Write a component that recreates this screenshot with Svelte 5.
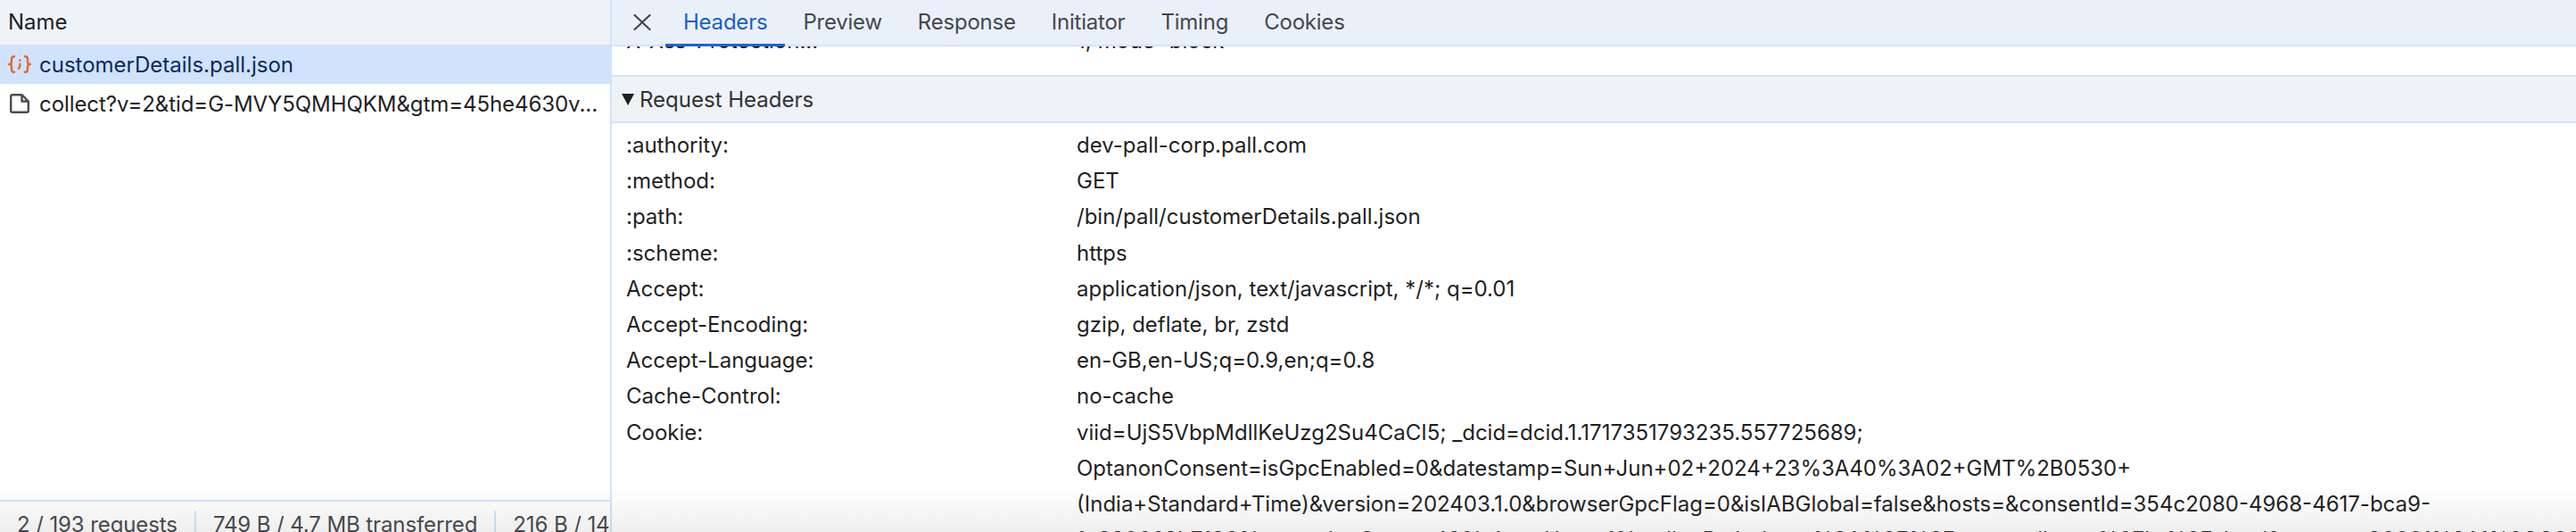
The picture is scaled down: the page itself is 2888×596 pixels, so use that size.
<script>
  const headers = [
    [':authority:', 'dev-pall-corp.pall.com'],
    [':method:', 'GET'],
    [':path:', '/bin/pall/customerDetails.pall.json'],
    [':scheme:', 'https'],
    ['Accept:', 'application/json, text/javascript, */*; q=0.01'],
    ['Accept-Encoding:', 'gzip, deflate, br, zstd'],
    ['Accept-Language:', 'en-GB,en-US;q=0.9,en;q=0.8'],
    ['Cache-Control:', 'no-cache']
  ];
  const cookie = [
    'viid=UjS5VbpMdllKeUzg2Su4CaCI5; _dcid=dcid.1.1717351793235.557725689;',
    'OptanonConsent=isGpcEnabled=0&datestamp=Sun+Jun+02+2024+23%3A40%3A02+GMT%2B0530+',
    '(India+Standard+Time)&version=202403.1.0&browserGpcFlag=0&isIABGlobal=false&hosts=&consentId=354c2080-4968-4617-bca9-',
    '1e380668b7136&interactionCount=49&isAnonUser=1&landingPath=https%3A%2F%2Fwww.pall.com%2Fbr%2Fcloud&groups=C0001%3A1%2CC0003'
  ];
  const tabs = ['Headers', 'Preview', 'Response', 'Initiator', 'Timing', 'Cookies'];
</script>

<div class="root">
  <aside class="left">
    <div class="name-head">Name</div>
    <div class="req selected">
      <svg class="ico-json" viewBox="0 0 26 20" fill="none" stroke="#e06a35" stroke-width="2.400" stroke-linecap="round" stroke-linejoin="round">
        <path d="M7 1.200C4.800 1.200 4 2.400 4 4v3.500C4 9 3 10 1.200 10 3 10 4 11 4 12.500V16c0 1.600.8 2.800 3 2.800"/>
        <path d="M19 1.200c2.200 0 3 1.200 3 2.800v3.500c0 1.500 1 2.500 2.800 2.500-1.800 0-2.800 1-2.800 2.500V16c0 1.600-.8 2.800-3 2.800"/>
        <path d="M13.300 5.500v.2M13.300 9.800v2.400c0 1-.6 2-1.500 2.600"/>
      </svg>
      <span>customerDetails.pall.json</span>
    </div>
    <div class="req">
      <svg class="ico-file" viewBox="0 0 22 22" fill="none" stroke="#4a4c50" stroke-width="2.400" stroke-linejoin="round">
        <path d="M3 1.200h10.500l7.300 7.300V19a1.800 1.800 0 0 1-1.800 1.800H3A1.800 1.800 0 0 1 1.200 19V3A1.800 1.800 0 0 1 3 1.200z"/>
        <path d="M13.500 1.200v7.300h7.300"/>
      </svg>
      <span class="clip">collect?v=2&amp;tid=G-MVY5QMHQKM&amp;gtm=45he4630v...</span>
    </div>
    <div class="spacer"></div>
    <div class="status">
      <span>2 / 193 requests</span>
      <span>749 B / 4.7 MB transferred</span>
      <span>216 B / 14</span>
    </div>
  </aside>
  <main class="right">
    <nav class="tabbar">
      <svg class="close" viewBox="0 0 20 18" fill="none" stroke="#45474b" stroke-width="2.200" stroke-linecap="round">
        <path d="M1.500 1l17 16M18.500 1L1.500 17"/>
      </svg>
      {#each tabs as t, i}
        <div class="tab" class:active={i === 0}>{t}</div>
      {/each}
    </nav>
    <div class="clipped">
      <div class="row cut"><div class="k">X-Xss-Protection...</div><div class="v">1; mode=block</div></div>
    </div>
    <div class="section">
      <span class="tri"></span>
      <span>Request Headers</span>
    </div>
    <div class="list">
      {#each headers as [k, v]}
        <div class="row"><div class="k">{k}</div><div class="v">{v}</div></div>
      {/each}
      <div class="row">
        <div class="k">Cookie:</div>
        <div class="v">{#each cookie as line}<div class="line">{line}</div>{/each}</div>
      </div>
    </div>
  </main>
  <div class="fade"></div>
</div>

<style>
  :global(body) { margin: 0; background: #fff; }
  .root {
    position: relative;
    width: 2888px;
    height: 596px;
    overflow: hidden;
    display: grid;
    grid-template-columns: 686px 1fr;
    font-family: Inter, "Liberation Sans", sans-serif;
    font-size: 24px;
    letter-spacing: 0;
    color: #1f1f1f;
  }
  .left {
    display: flex;
    flex-direction: column;
    box-sizing: border-box;
    border-right: 2px solid #d3e3fd;
    height: 596px;
    overflow: hidden;
  }
  .name-head {
    height: 50px;
    flex: none;
    box-sizing: border-box;
    padding-left: 9px;
    line-height: 50px;
    background: #eff3f8;
  }
  .req {
    height: 44px;
    flex: none;
    display: flex;
    align-items: center;
    white-space: nowrap;
    color: #1f1f1f;
  }
  .req.selected { background: #d0e2fc; color: #0a2a5c; }
  .ico-json { width: 26px; height: 20px; flex: none; margin: 0 9px 0 9px; }
  .ico-file { width: 22px; height: 22px; flex: none; margin: 0 11px 0 11px; }
  .clip { overflow: hidden; letter-spacing: -0.07px; }
  .spacer { flex: 1; }
  .status {
    height: 36px;
    box-sizing: border-box;
    flex: none;
    border-top: 2px solid #d3e3fd;
    display: flex;
    white-space: nowrap;
    overflow: hidden;
    padding-top: 10px;
    line-height: 32px;
    color: #45474b;
    letter-spacing: -0.1px;
  }
  .status span { padding: 0 19px; border-right: 2px solid #d3e3fd; height: 40px; flex: none; }
  .status span:last-child { border-right: none; }
  .right { display: flex; flex-direction: column; overflow: hidden; height: 596px; }
  .tabbar {
    height: 50px;
    flex: none;
    background: #e9f0fa;
    border-bottom: 2px solid #d3e3fd;
    display: flex;
    align-items: stretch;
    padding-left: 24px;
    position: relative;
    z-index: 1;
    letter-spacing: -0.22px;
  }
  .close { width: 20px; height: 18px; align-self: center; margin-right: 16px; }
  .tab {
    padding: 0 20px;
    height: 52px;
    line-height: 50px;
    color: #45474b;
  }
  .tab.active { color: #1a5fc2; box-shadow: inset 0 -3px 0 #1a66d6; }
  .clipped {
    height: 32px;
    flex: none;
    overflow: hidden;
  }
  .cut { margin-top: -26px; }
  .section {
    height: 50px;
    flex: none;
    background: #eff2f7;
    border-top: 2px solid #d3e3fd;
    border-bottom: 2px solid #d3e3fd;
    display: flex;
    align-items: center;
    gap: 6px;
    padding-left: 11px;
    color: #303236;
  }
  .tri {
    width: 0; height: 0;
    border-left: 7px solid transparent;
    border-right: 7px solid transparent;
    border-top: 13px solid #1f1f1f;
  }
  .list { padding-top: 5px; }
  .row {
    display: grid;
    grid-template-columns: 505px 1fr;
    padding-left: 16px;
    line-height: 40.2px;
    white-space: nowrap;
  }
  .fade {
    position: absolute;
    left: 0; right: 0; bottom: 0;
    height: 50px;
    background: linear-gradient(to bottom, rgba(90,90,90,0), rgba(90,90,90,0.1));
    pointer-events: none;
  }
</style>
